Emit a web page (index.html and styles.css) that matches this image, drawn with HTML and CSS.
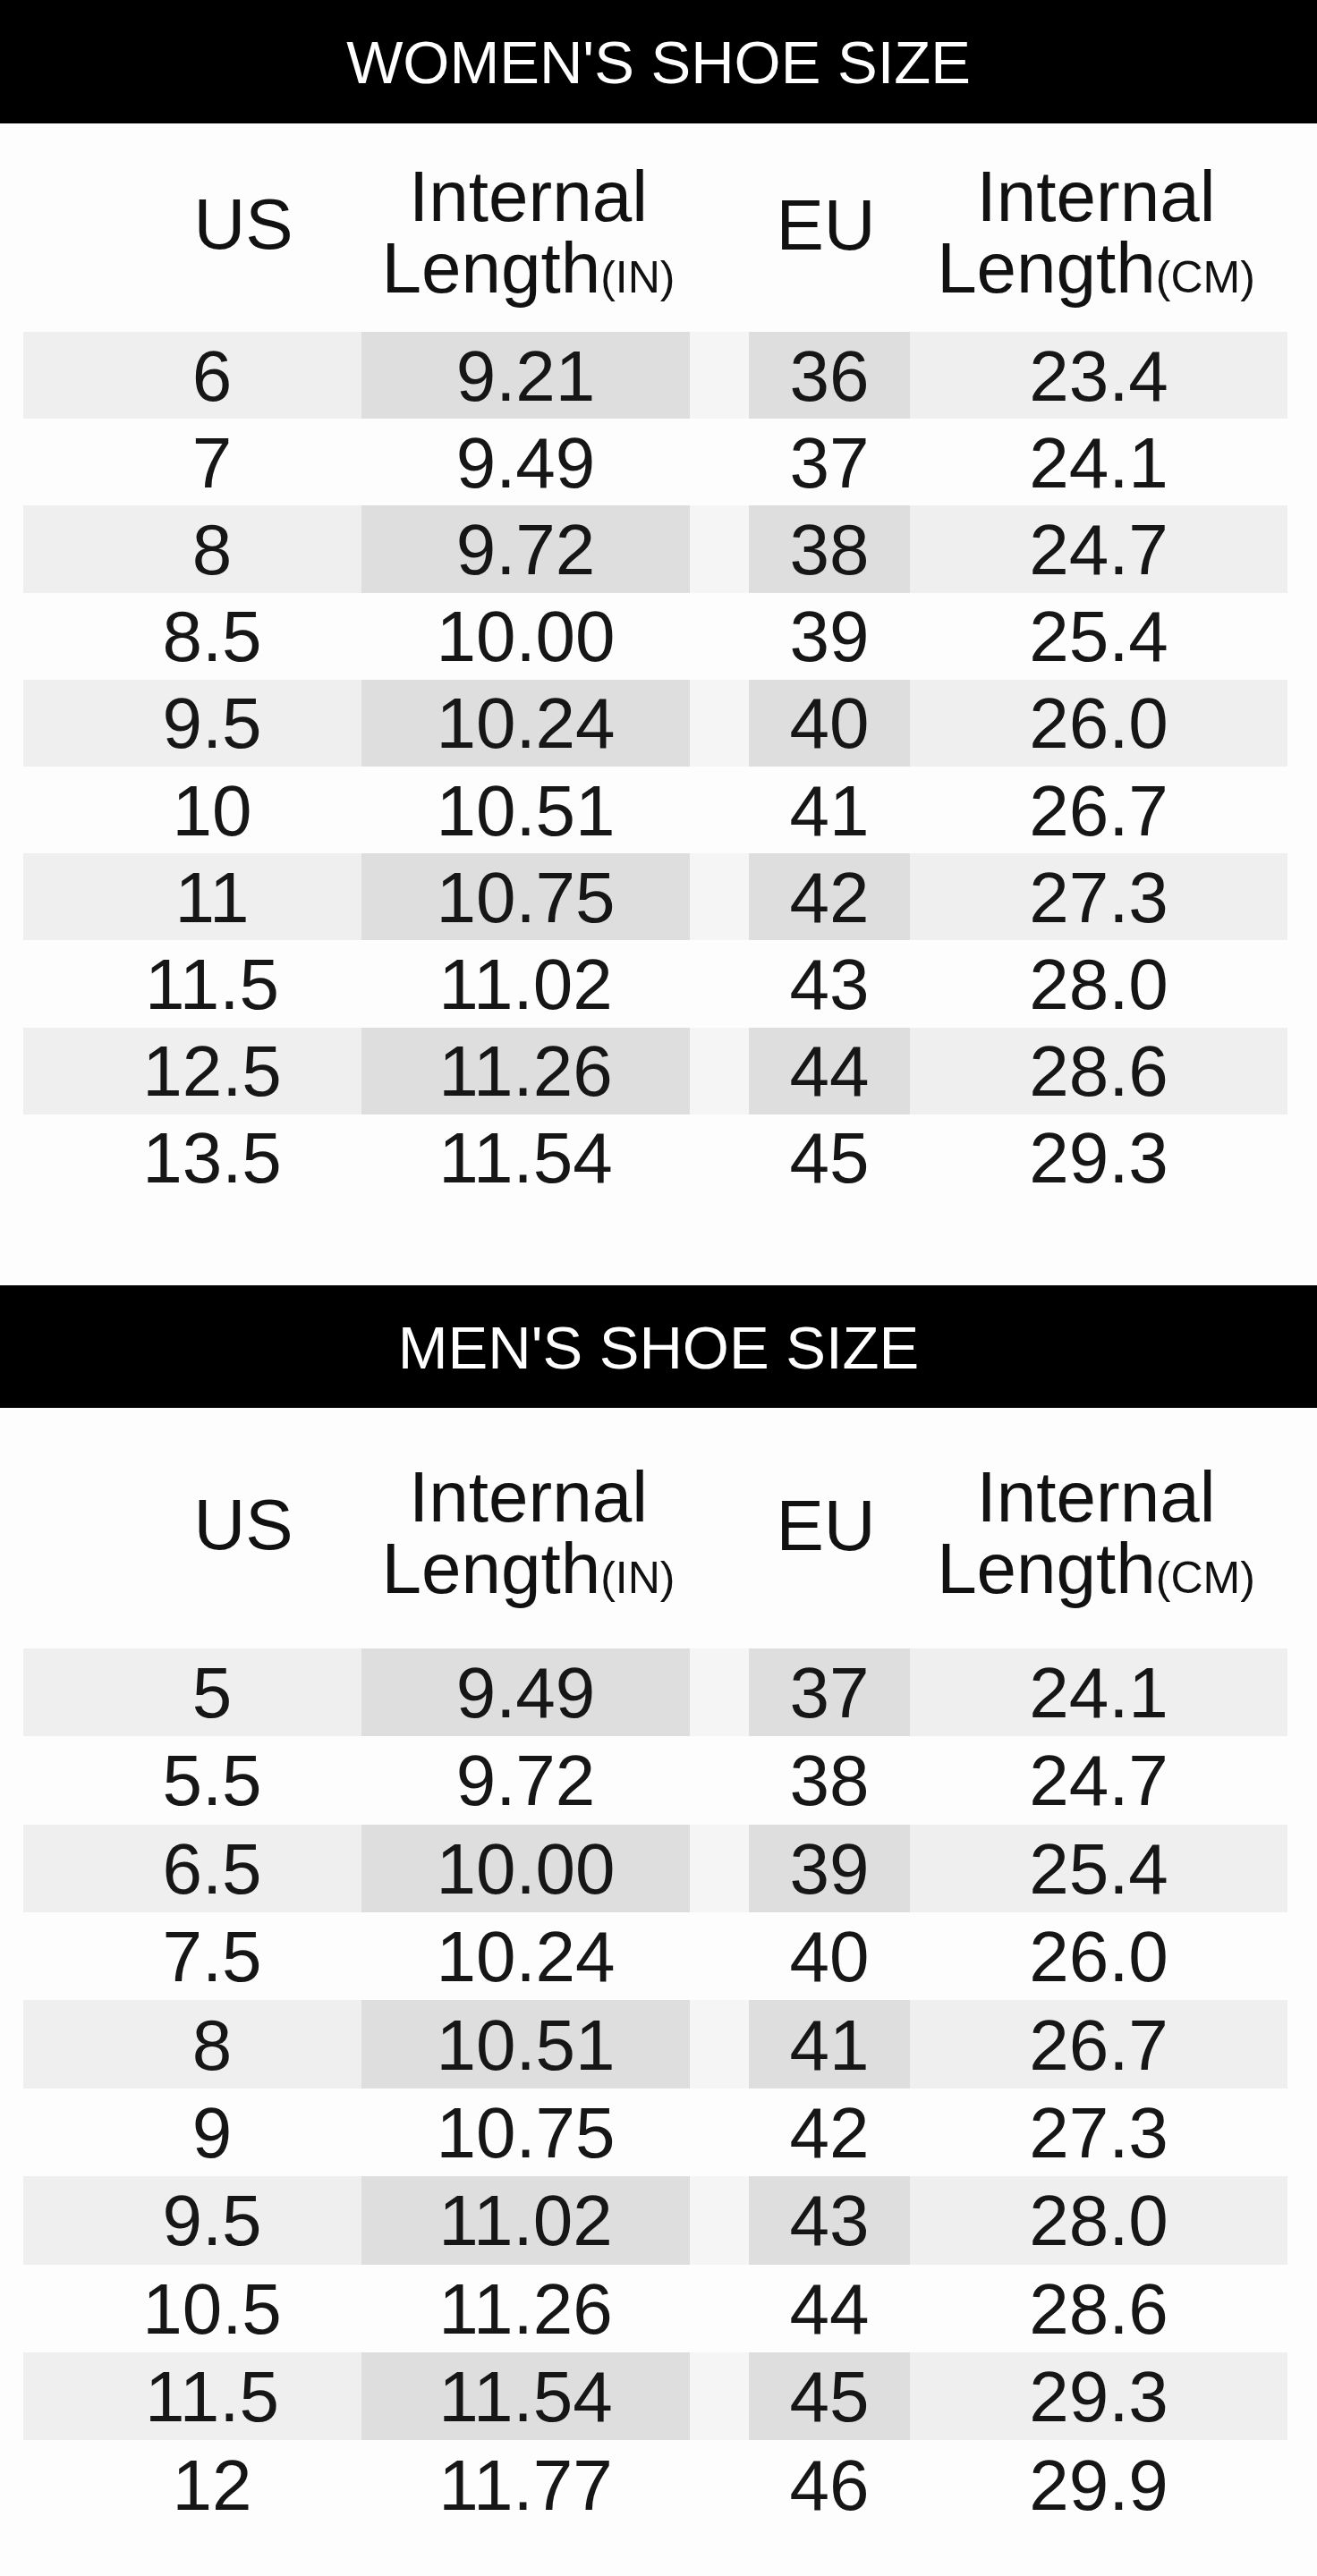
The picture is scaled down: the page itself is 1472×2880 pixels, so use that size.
FILE: index.html
```html
<!DOCTYPE html>
<html lang="en">
<head>
<meta charset="utf-8">
<title>Shoe Size Chart</title>
<link rel="stylesheet" href="styles.css">
</head>
<body>
<section class="chart chart-women">
  <h2 class="title">WOMEN'S SHOE SIZE</h2>
  <div class="head">
    <div class="lbl lbl-us">US</div>
    <div class="lbl lbl-in">Internal<br>Length<span class="unit">(IN)</span></div>
    <div class="lbl lbl-gap"></div>
    <div class="lbl lbl-eu">EU</div>
    <div class="lbl lbl-cm">Internal<br>Length<span class="unit">(CM)</span></div>
  </div>
  <div class="rows">
    <div class="row stripe"><div class="c us">6</div><div class="c in">9.21</div><div class="c gap"></div><div class="c eu">36</div><div class="c cm">23.4</div></div>
    <div class="row"><div class="c us">7</div><div class="c in">9.49</div><div class="c gap"></div><div class="c eu">37</div><div class="c cm">24.1</div></div>
    <div class="row stripe"><div class="c us">8</div><div class="c in">9.72</div><div class="c gap"></div><div class="c eu">38</div><div class="c cm">24.7</div></div>
    <div class="row"><div class="c us">8.5</div><div class="c in">10.00</div><div class="c gap"></div><div class="c eu">39</div><div class="c cm">25.4</div></div>
    <div class="row stripe"><div class="c us">9.5</div><div class="c in">10.24</div><div class="c gap"></div><div class="c eu">40</div><div class="c cm">26.0</div></div>
    <div class="row"><div class="c us">10</div><div class="c in">10.51</div><div class="c gap"></div><div class="c eu">41</div><div class="c cm">26.7</div></div>
    <div class="row stripe"><div class="c us">11</div><div class="c in">10.75</div><div class="c gap"></div><div class="c eu">42</div><div class="c cm">27.3</div></div>
    <div class="row"><div class="c us">11.5</div><div class="c in">11.02</div><div class="c gap"></div><div class="c eu">43</div><div class="c cm">28.0</div></div>
    <div class="row stripe"><div class="c us">12.5</div><div class="c in">11.26</div><div class="c gap"></div><div class="c eu">44</div><div class="c cm">28.6</div></div>
    <div class="row"><div class="c us">13.5</div><div class="c in">11.54</div><div class="c gap"></div><div class="c eu">45</div><div class="c cm">29.3</div></div>
  </div>
</section>
<section class="chart chart-men">
  <h2 class="title">MEN'S SHOE SIZE</h2>
  <div class="head">
    <div class="lbl lbl-us">US</div>
    <div class="lbl lbl-in">Internal<br>Length<span class="unit">(IN)</span></div>
    <div class="lbl lbl-gap"></div>
    <div class="lbl lbl-eu">EU</div>
    <div class="lbl lbl-cm">Internal<br>Length<span class="unit">(CM)</span></div>
  </div>
  <div class="rows">
    <div class="row stripe"><div class="c us">5</div><div class="c in">9.49</div><div class="c gap"></div><div class="c eu">37</div><div class="c cm">24.1</div></div>
    <div class="row"><div class="c us">5.5</div><div class="c in">9.72</div><div class="c gap"></div><div class="c eu">38</div><div class="c cm">24.7</div></div>
    <div class="row stripe"><div class="c us">6.5</div><div class="c in">10.00</div><div class="c gap"></div><div class="c eu">39</div><div class="c cm">25.4</div></div>
    <div class="row"><div class="c us">7.5</div><div class="c in">10.24</div><div class="c gap"></div><div class="c eu">40</div><div class="c cm">26.0</div></div>
    <div class="row stripe"><div class="c us">8</div><div class="c in">10.51</div><div class="c gap"></div><div class="c eu">41</div><div class="c cm">26.7</div></div>
    <div class="row"><div class="c us">9</div><div class="c in">10.75</div><div class="c gap"></div><div class="c eu">42</div><div class="c cm">27.3</div></div>
    <div class="row stripe"><div class="c us">9.5</div><div class="c in">11.02</div><div class="c gap"></div><div class="c eu">43</div><div class="c cm">28.0</div></div>
    <div class="row"><div class="c us">10.5</div><div class="c in">11.26</div><div class="c gap"></div><div class="c eu">44</div><div class="c cm">28.6</div></div>
    <div class="row stripe"><div class="c us">11.5</div><div class="c in">11.54</div><div class="c gap"></div><div class="c eu">45</div><div class="c cm">29.3</div></div>
    <div class="row"><div class="c us">12</div><div class="c in">11.77</div><div class="c gap"></div><div class="c eu">46</div><div class="c cm">29.9</div></div>
  </div>
</section>
</body>
</html>
```

FILE: styles.css
```css
html, body {
  margin: 0;
  padding: 0;
}

body {
  background: #fdfdfd;
  color: #111111;
  font-family: "Liberation Sans", Arial, sans-serif;
  width: 1472px;
  min-height: 2880px;
}

.chart {
  display: flex;
  flex-direction: column;
}

.title {
  margin: 0;
  height: 138px;
  line-height: 139px;
  background: #000000;
  color: #ffffff;
  font-size: 67px;
  font-weight: normal;
  text-align: center;
  overflow: hidden;
}

.chart-men {
  margin-top: 94px;
}

.chart-men .title {
  height: 137px;
}

.head,
.row {
  display: grid;
  grid-template-columns: 378px 367px 66px 180px 422px;
  margin-left: 26px;
}

.head {
  align-items: center;
  font-size: 80px;
  line-height: 80px;
}

.chart-women .head {
  margin-top: 42px;
  margin-bottom: 31px;
}

.chart-men .head {
  margin-top: 60px;
  margin-bottom: 49px;
}

.lbl {
  text-align: center;
}

.lbl-us {
  padding-left: 114px;
  padding-bottom: 18px;
}

.lbl-eu {
  padding-bottom: 16px;
  padding-right: 8px;
}

.lbl-in {
  padding-left: 6px;
}

.lbl-cm {
  padding-right: 6px;
}

.unit {
  font-size: 50px;
  line-height: 1;
}

.rows {
  display: flex;
  flex-direction: column;
}

.row {
  font-size: 80px;
  align-items: center;
  color: #161616;
}

.chart-women .row {
  height: 97.2px;
}

.chart-men .row {
  height: 98.4px;
}

.c {
  height: 100%;
  display: flex;
  align-items: center;
  justify-content: center;
  padding-top: 2px;
  box-sizing: border-box;
  line-height: 1;
}

.c.us {
  padding-left: 44px;
}

.stripe .us,
.stripe .cm {
  background: #efefef;
}

.stripe .in,
.stripe .eu {
  background: #dedede;
}

.stripe .gap {
  background: #f5f5f5;
}
```
